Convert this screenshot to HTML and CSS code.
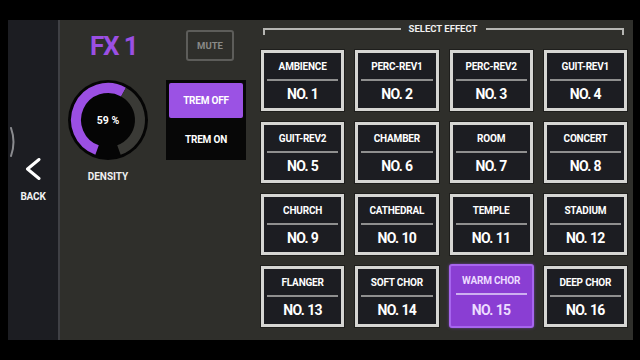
FILE: index.html
```html
<!DOCTYPE html>
<html>
<head>
<meta charset="utf-8">
<link rel="stylesheet" href="styles.css">
</head>
<body>
<div class="app">
  <aside class="sidebar">
    <svg class="handle" width="6" height="30" viewBox="0 0 6 30"><path d="M1 1 Q6 15 1 29" fill="none" stroke="#8a8b8f" stroke-width="2" stroke-linecap="round"/></svg>
    <svg class="chev" width="16" height="22" viewBox="0 0 16 22"><path d="M14 1.5 L2.5 11 L14 20.5" fill="none" stroke="#fff" stroke-width="3" stroke-linecap="round" stroke-linejoin="round"/></svg>
    <div class="back-label">BACK</div>
  </aside>
  <main class="panel">
    <section class="left">
      <div class="top-row">
        <div class="title">FX 1</div>
        <div class="mute">MUTE</div>
      </div>
      <div class="controls">
        <div class="knob-col">
          <svg class="knob" width="80" height="80" viewBox="0 0 80 80">
            <circle cx="40" cy="40" r="40" fill="#050505"/>
            <path d="M29.06 70.07 A32 32 0 1 1 55.51 12.01" fill="none" stroke="#9b4fe3" stroke-width="10"/>
            <path d="M55.51 12.01 A32 32 0 0 1 50.94 70.07" fill="none" stroke="#3a3a36" stroke-width="10"/>
            <text x="40" y="44" text-anchor="middle" class="knob-text">59 %</text>
          </svg>
          <div class="knob-label">DENSITY</div>
        </div>
        <div class="trem">
          <div class="trem-off">TREM OFF</div>
          <div class="trem-on">TREM ON</div>
        </div>
      </div>
    </section>
    <section class="right">
      <div class="header">
        <span class="hline hline-l"></span>
        <span class="htext">SELECT EFFECT</span>
        <span class="hline hline-r"></span>
      </div>
      <div class="grid">
        <div class="card"><div class="name">AMBIENCE</div><div class="sep"></div><div class="num">NO. 1</div></div>
        <div class="card"><div class="name">PERC-REV1</div><div class="sep"></div><div class="num">NO. 2</div></div>
        <div class="card"><div class="name">PERC-REV2</div><div class="sep"></div><div class="num">NO. 3</div></div>
        <div class="card"><div class="name">GUIT-REV1</div><div class="sep"></div><div class="num">NO. 4</div></div>
        <div class="card"><div class="name">GUIT-REV2</div><div class="sep"></div><div class="num">NO. 5</div></div>
        <div class="card"><div class="name">CHAMBER</div><div class="sep"></div><div class="num">NO. 6</div></div>
        <div class="card"><div class="name">ROOM</div><div class="sep"></div><div class="num">NO. 7</div></div>
        <div class="card"><div class="name">CONCERT</div><div class="sep"></div><div class="num">NO. 8</div></div>
        <div class="card"><div class="name">CHURCH</div><div class="sep"></div><div class="num">NO. 9</div></div>
        <div class="card"><div class="name">CATHEDRAL</div><div class="sep"></div><div class="num">NO. 10</div></div>
        <div class="card"><div class="name">TEMPLE</div><div class="sep"></div><div class="num">NO. 11</div></div>
        <div class="card"><div class="name">STADIUM</div><div class="sep"></div><div class="num">NO. 12</div></div>
        <div class="card"><div class="name">FLANGER</div><div class="sep"></div><div class="num">NO. 13</div></div>
        <div class="card"><div class="name">SOFT CHOR</div><div class="sep"></div><div class="num">NO. 14</div></div>
        <div class="card card-active"><div class="name">WARM CHOR</div><div class="sep"></div><div class="num">NO. 15</div></div>
        <div class="card"><div class="name">DEEP CHOR</div><div class="sep"></div><div class="num">NO. 16</div></div>
      </div>
    </section>
  </main>
</div>
</body>
</html>
```

FILE: styles.css
```css
* { box-sizing: border-box; }
html, body { margin: 0; padding: 0; }
body {
  background: #000;
  width: 640px;
  height: 360px;
  overflow: hidden;
  font-family: Roboto, "Liberation Sans", sans-serif;
  font-weight: 700;
  color: #fff;
}
.app {
  display: flex;
  margin: 20px 7px 0 8px;
  width: 625px;
  height: 320px;
}
.sidebar {
  width: 52px;
  background: #1c1d22;
  border-right: 2px solid #3f4045;
  display: flex;
  flex-direction: column;
  align-items: center;
  padding-top: 107px;
}
.handle { align-self: flex-start; margin-left: 2px; display: block; }
.chev { display: block; margin-top: 1px; }
.back-label {
  margin-top: 11px;
  font-size: 10px;
  line-height: 12px;
  letter-spacing: -0.2px;
  color: #f2f2f2;
}
.panel {
  flex: 1;
  display: flex;
  background: #2f2f2b;
}
.left {
  width: 195px;
  padding-top: 10px;
}
.top-row {
  display: flex;
  align-items: center;
  height: 31px;
}
.title {
  width: 126px;
  padding-left: 30px;
  font-size: 26px;
  line-height: 30px;
  letter-spacing: -1.2px;
  color: #9b4fe3;
}
.mute {
  width: 48px;
  height: 31px;
  border: 2px solid #5d5d5a;
  border-radius: 3px;
  display: flex;
  align-items: center;
  justify-content: center;
  font-size: 9.5px;
  color: #8a8a87;
}
.controls {
  display: flex;
  margin-top: 19px;
  padding-left: 8px;
}
.knob-col {
  width: 80px;
  display: flex;
  flex-direction: column;
  align-items: center;
}
.knob { display: block; }
.knob-text { fill: #fff; font-family: Roboto, "Liberation Sans", sans-serif; font-weight: 700; font-size: 10.5px; }
.knob-label {
  margin-top: 11px;
  font-size: 10px;
  line-height: 12px;
  color: #f0f0f0;
}
.trem {
  margin-left: 18px;
  width: 80px;
  height: 80px;
  background: #070707;
  padding: 3px;
}
.trem-off {
  height: 35px;
  background: #9b52e4;
  border-radius: 2px;
  display: flex;
  align-items: center;
  justify-content: center;
  font-size: 10px;
  letter-spacing: -0.2px;
}
.trem-on {
  height: 39px;
  padding-top: 4px;
  display: flex;
  align-items: center;
  justify-content: center;
  font-size: 10px;
  letter-spacing: -0.2px;
}
.right {
  flex: 1;
  padding: 3px 6px 0 6px;
}
.header {
  display: flex;
  height: 12px;
}
.hline {
  flex: 1;
  height: 7px;
  margin-top: 5px;
  border-top: 2px solid #b5b5b2;
}
.hline-l { margin-left: 2px; border-left: 2px solid #b5b5b2; }
.hline-r { margin-right: 3px; border-right: 2px solid #b5b5b2; }
.htext {
  margin: 0 9px 0 8px;
  font-size: 9.5px;
  line-height: 12px;
  color: #f0f0f0;
}
.grid {
  margin-top: 15px;
  display: grid;
  grid-template-columns: repeat(4, 1fr);
  grid-auto-rows: 61px;
  column-gap: 11px;
  row-gap: 11px;
}
.card {
  background: #1c1d22;
  border: 3px solid #d6d6d3;
  box-shadow: 0 0 0 1px #1e1e1c;
  padding: 0 3px;
  display: flex;
  flex-direction: column;
}
.name {
  height: 26px;
  display: flex;
  align-items: center;
  justify-content: center;
  font-size: 10px;
  letter-spacing: -0.2px;
  padding-top: 1px;
}
.sep {
  height: 2px;
  background: #8f8f8f;
}
.num {
  flex: 1;
  display: flex;
  align-items: center;
  justify-content: center;
  font-size: 14px;
  letter-spacing: -0.6px;
  padding-bottom: 1px;
}
.card-active {
  margin: -2px -1px -1px -1px;
  background: #8a3ed3;
  border: 2px solid #a765ee;
  border-radius: 3px;
  box-shadow: 0 0 3px rgba(150, 80, 230, 0.6);
  padding: 1px 5px 0 5px;
  color: #ecdcff;
}
.card-active .sep { background: #cdb0f0; }
```
